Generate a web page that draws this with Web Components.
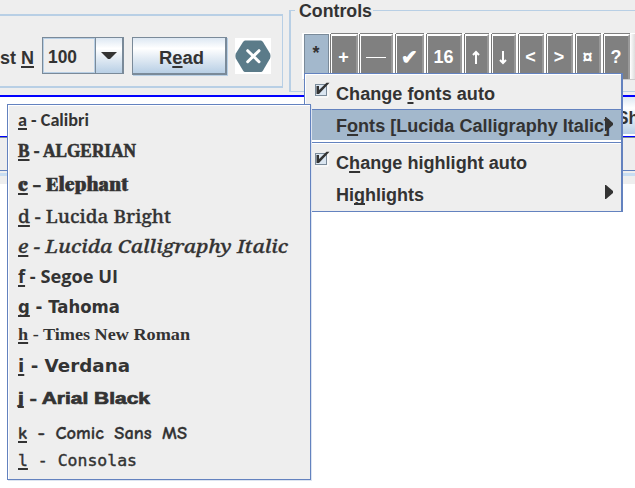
<!DOCTYPE html>
<html lang="en"><head><meta charset="utf-8"><title>Controls</title>
<style>
html,body{margin:0;width:635px;height:488px;overflow:hidden;background:#fff}
</style></head><body>
<script>
const base = '*{box-sizing:border-box}';
function define(name, html, setup){
  customElements.define(name, class extends HTMLElement{
    constructor(){
      super();
      this.attachShadow({mode:'open'}).innerHTML = html.replace('<style>','<style>'+base);
    }
    connectedCallback(){ if(setup) setup(this, this.shadowRoot); }
  });
}

// Text squeezed or stretched horizontally to a given width.
define('fit-text', `<style>:host{display:block;white-space:pre;line-height:20px;height:20px}
span{display:inline-block;transform-origin:0 50%}</style><span><slot></slot></span>`, (h,r)=>{
  const s=r.querySelector('span'), w=+h.getAttribute('w');
  h.style.width=w+'px';
  queueMicrotask(()=>{ if(s.offsetWidth) s.style.transform='scaleX('+w/s.getBoundingClientRect().width+')'; });
});

define('combo-box', `<style>:host{display:flex;width:82px;height:37px;border:1px solid #7a8a99;border-right-width:2px}
.v{width:52px;border:1px solid #b8cfe5;padding:8px 0 0 4px}
.a{flex:1;border-left:1px solid #7a8a99;background:linear-gradient(#dde8f3,#fff 30%,#e5edf5 55%,#b8cfe5);display:flex;align-items:center;justify-content:center}
</style><div class="v"><slot></slot></div><div class="a"><svg width="16" height="8"><path d="M0 0H16L9 7H7Z" fill="#333"/></svg></div>`);

define('push-button', `<style>:host{display:block;width:95px;height:38px;border:1px solid #7a8a99;border-width:1px 2px 2px 1px;box-shadow:1px 1px #b8cfe5;background:linear-gradient(#dde8f3,#fff 30%,#e5edf5 55%,#b8cfe5);padding:10px 0 0 26px}</style><slot></slot>`);

define('close-icon', `<style>:host{display:block;width:36px;height:36px;background:#fff}svg{display:block}</style>
<svg width="36" height="36" viewBox="0 0 36 36"><path d="M10 2.5H26Q27 2.5 28 4L35 15.5Q36 18 35 20.5L28 32.5Q27 34 26 34H10Q9 34 8 32.5L.8 20.5Q0 18 .8 15.5L8 4Q9 2.5 10 2.5Z" fill="#5b7b89"/><path d="M12.7 12.7L24 23.7M24 12.7L12.7 23.7" stroke="#fff" stroke-width="3" stroke-linecap="round"/></svg>`);

define('read-panel', `<style>:host{display:flex;width:283px;height:74px;margin-top:14px;border:solid #b8cfe5;border-width:2px 1px 2px 0}
.lab{width:42px;padding-top:32px;}combo-box{margin-top:21px}push-button{margin:21px 0 0 8px}close-icon{margin:22px 0 0 8px}u{text-decoration-thickness:2px;text-underline-offset:2px;text-decoration-skip-ink:none}</style>
<div class="lab"><fit-text w="34">st <u>N</u></fit-text></div><combo-box><fit-text w="29">100</fit-text></combo-box>
<push-button><fit-text w="45">R<u>e</u>ad</fit-text></push-button><close-icon></close-icon>`);

define('tool-key', `<style>:host{display:block;flex:none;height:45px;background:#808080;border:solid;border-width:2px 2px 0 1px;border-color:#fff #999 #fff #fff;box-shadow:0 -1px #808080,-1px 0 #777;color:#fff;text-align:center;font-size:18px;line-height:43px}
:host([on]){background:#a3b8cc;color:#333;border-color:#7a8a99;border-width:1px 1px 0 1px;box-shadow:none;line-height:37px}
svg{display:inline-block;vertical-align:top}</style><slot></slot>`, h=>{
  h.style.width=h.getAttribute('w')+'px'; h.style.marginLeft=(h.getAttribute('gap')||0)+'px';
});

define('control-group', `<style>:host{display:block;position:relative;margin-left:6px;width:347px;height:92px}
.box{margin-top:10px;height:82px;border:solid #b8cfe5;border-width:1px 0 1px 2px}
.cap{position:absolute;left:6px;top:1px;background:#eee;padding:0 1px 0 4px}
.bar{margin:22px 0 0 11px;height:47px;border:solid #fff;border-width:1px 0 0 2px;display:flex;background:linear-gradient(90deg,#fff 326px,#ddd);border-bottom:1px solid #ccc}
.tick{display:block;font-size:20px}
</style><div class="cap"><fit-text w="73">Controls</fit-text></div><div class="box"><div class="bar">
<tool-key on w="25">*</tool-key><tool-key w="27" gap="2">+</tool-key><tool-key w="33" gap="2"><svg width="20" height="42"><path d="M0 21.5H20" stroke="#fff"/></svg></tool-key>
<tool-key w="28" gap="3"><span class="tick">✔</span></tool-key><tool-key w="35" gap="3">16</tool-key>
<tool-key w="24" gap="3"><svg width="10" height="42"><path d="M5 28V16M2 19L5 16L8 19" fill="none" stroke="#fff" stroke-width="2"/></svg></tool-key>
<tool-key w="24" gap="3"><svg width="10" height="42"><path d="M5 15V27M2 24L5 27L8 24" fill="none" stroke="#fff" stroke-width="2"/></svg></tool-key>
<tool-key w="25" gap="3">&lt;</tool-key><tool-key w="26" gap="3">&gt;</tool-key><tool-key w="25" gap="3">¤</tool-key><tool-key w="26" gap="3">?</tool-key>
</div></div>`);

// Rows of the window partly hidden behind the menus.
define('back-window', `<style>:host{display:block;height:393px;background:#fff;border-top:2px solid #00f}
.a{height:39px;display:flex;justify-content:flex-end}.s{width:12px;overflow:hidden;background:linear-gradient(#dde8f3,#fff 30%,#e5edf5 55%,#b8cfe5);height:37px;padding-top:11px}
.s fit-text{margin-left:-6px}
.b{height:48px;background:#eee;border-top:1px solid #00f;box-shadow:inset 0 1px #7a8a99;padding-top:33px}
.c{height:6px;background:#c8ddf2;border-top:1px solid #6382bf;box-shadow:inset 0 2px #eee}</style>
<div class="a"><div class="s"><fit-text w="22">Sh</fit-text></div></div><div class="b"><div class="c"></div></div>`);

define('menu-row', `<style>:host{display:flex;height:32px;padding:8px 4px 0 9px;position:relative}
:host([on]){background:#a3b8cc;border-top:1px solid #6382bf}
.m{width:22px;flex:none}.m svg{display:none;margin-top:-2px}
:host([checked]) .m svg{display:block}.ar{display:none;position:absolute;right:8px;top:7px}:host([sub]) .ar{display:block}</style>
<div class="m"><svg width="17" height="17"><rect x="1.5" y="2.5" width="11" height="11" fill="#dbe6f1" stroke="#7a8a99"/><path d="M1 15H14V3" fill="none" stroke="#fff"/><path d="M2.5 4H5V8L12.5 .8H15.5L5 12H2.5Z" fill="#333"/></svg></div>
<slot></slot><svg class="ar" width="8" height="14"><path d="M0 0H1L8 6V8L1 14H0Z" fill="#333"/></svg>`);

define('control-menu', `<style>:host{position:absolute;left:304px;top:73px;width:319px;height:139px;background:#eee;border:1px solid #6382bf;border-right-width:2px;box-shadow:inset 1px 1px #fff}
.sep{height:4px;border:solid #fff;border-width:2px 0 1px;background:#6382bf}
u{text-decoration-thickness:2px;text-underline-offset:2px;text-decoration-skip-ink:none}</style>
<menu-row checked style="height:35px;padding-top:10px"><fit-text w="159">Change <u>f</u>onts auto</fit-text></menu-row>
<menu-row on sub style="height:31px;padding-top:6px"><fit-text w="274">F<u>o</u>nts [Lucida Calligraphy Italic]</fit-text></menu-row>
<div class="sep"></div>
<menu-row checked style="height:34px;padding-top:9px"><fit-text w="191">C<u>h</u>ange highlight auto</fit-text></menu-row>
<menu-row sub style="padding-top:7px"><fit-text w="88">Hi<u>g</u>hlights</fit-text></menu-row>`);

define('font-menu', `<style>:host{position:absolute;left:7px;top:104px;width:304px;height:376px;background:#eee;border:1px solid #6382bf;box-shadow:inset 1px 1px #fff,1px 1px #dde4f0;padding:6px 0 0 10px}
fit-text{height:var(--h)}u{text-decoration-thickness:2px;text-underline-offset:2px;text-decoration-skip-ink:none}</style>
<fit-text w="71" style="--h:30px;font:bold 17px/20px Carlito,sans-serif"><u>a</u> - Calibri</fit-text>
<fit-text w="118" style="--h:33px;font:bold 18px/20px 'Liberation Serif',serif;-webkit-text-stroke:.6px #333"><u>B</u> - ALGERIAN</fit-text>
<fit-text w="110" style="--h:32px;font:900 18px/20px 'Playfair Display','Liberation Serif',serif;-webkit-text-stroke:.5px #333"><u>c</u> - Elephant</fit-text>
<fit-text w="153" style="--h:30px;font:500 17.5px/20px 'Noto Serif',serif;-webkit-text-stroke:.3px #333"><u>d</u> - Lucida Bright</fit-text>
<fit-text w="270" style="--h:31px;font:italic 500 18px/20px 'Noto Serif',serif;-webkit-text-stroke:.3px #333"><u>e</u> - Lucida Calligraphy Italic</fit-text>
<fit-text w="100" style="--h:30px;font:bold 17px/20px 'Open Sans',sans-serif"><u>f</u> - Segoe UI</fit-text>
<fit-text w="102" style="--h:28px;font:bold 17px/20px 'DejaVu Sans',sans-serif"><u>g</u> - Tahoma</fit-text>
<fit-text w="172" style="--h:31px;font:bold 17px/20px 'Liberation Serif',serif"><u>h</u> - Times New Roman</fit-text>
<fit-text w="112" style="--h:33px;font:bold 17.5px/20px 'DejaVu Sans',sans-serif"><u>i</u> - Verdana</fit-text>
<fit-text w="132" style="--h:34px;font:bold 17px/20px 'Liberation Sans',sans-serif;-webkit-text-stroke:.7px #333"><u>j</u> - Arial Black</fit-text>
<fit-text w="169" style="--h:28px;font:bold 19px/20px 'Comic Neue','Open Sans',sans-serif;word-spacing:4px;-webkit-text-stroke:.3px #333"><u>k</u> - Comic Sans MS</fit-text>
<fit-text w="119" style="--h:22px;font:16.5px/20px 'DejaVu Sans Mono',monospace;-webkit-text-stroke:.4px #333"><u>l</u> - Consolas</fit-text>`);

define('app-window', `<style>:host{display:block;position:relative;width:635px;height:488px;overflow:hidden;font:bold 18px/20px 'Liberation Sans',Arial,sans-serif;color:#333}
.top{display:flex;height:95px;background:#eee}</style>
<div class="top"><read-panel></read-panel><control-group></control-group></div><back-window></back-window><control-menu></control-menu><font-menu></font-menu>`);
</script>
<app-window></app-window>
</body></html>
